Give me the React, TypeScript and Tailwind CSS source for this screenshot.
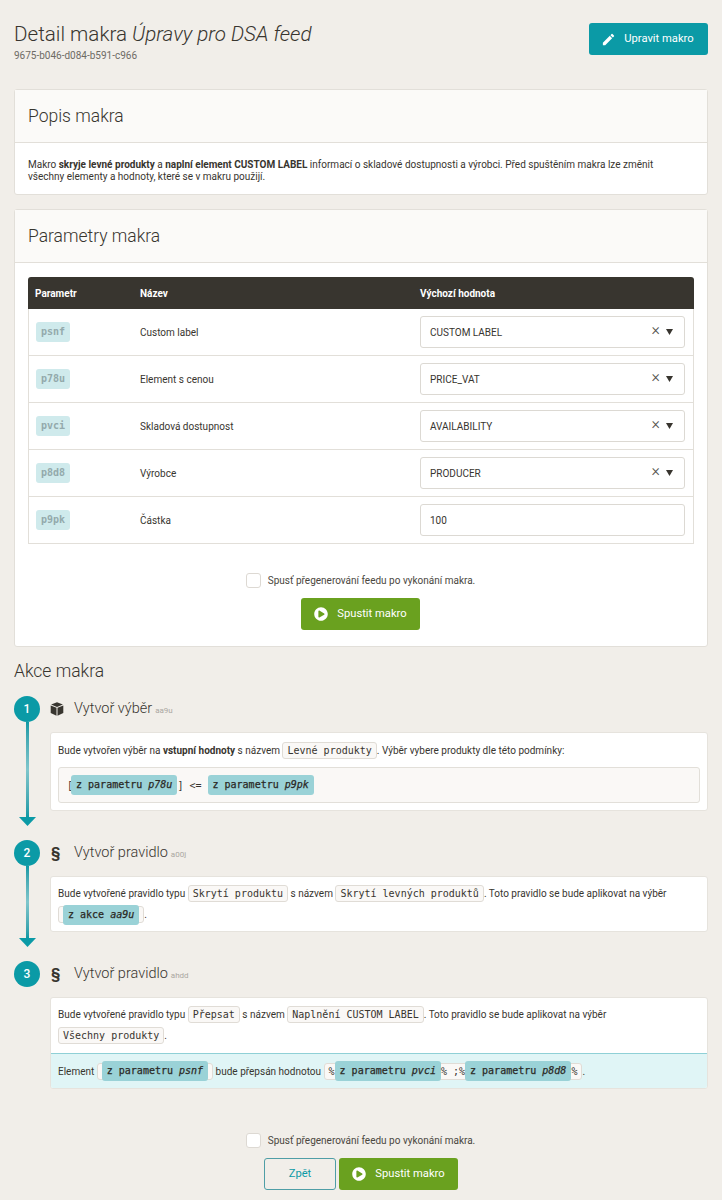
import React from "react";
import { MdEdit } from "react-icons/md";
import { FaPlayCircle } from "react-icons/fa";

const params = [
  { code: "psnf", name: "Custom label", value: "CUSTOM LABEL", select: true },
  { code: "p78u", name: "Element s cenou", value: "PRICE_VAT", select: true },
  { code: "pvci", name: "Skladová dostupnost", value: "AVAILABILITY", select: true },
  { code: "p8d8", name: "Výrobce", value: "PRODUCER", select: true },
  { code: "p9pk", name: "Částka", value: "100", select: false },
];

function Chip({ children }: { children: React.ReactNode }) {
  return (
    <code className="inline-flex h-[17px] shrink-0 items-center rounded-[3px] border border-[#e0dcd6] bg-[#faf8f6] px-[4px] font-['DejaVu_Sans_Mono',monospace] text-[10px] text-[#38352f] whitespace-pre">
      {children}
    </code>
  );
}

function Ref({ label, id }: { label: string; id: string }) {
  return (
    <span className="inline-block h-[20px] shrink-0 rounded-[3px] bg-[#9ad2d7] px-[5px] font-['DejaVu_Sans_Mono',monospace] text-[10px] leading-[20px] text-[#2b2925] whitespace-pre [-webkit-text-stroke:0.25px_#2b2925]">
      {label} <i>{id}</i>
    </span>
  );
}

function Line({ children }: { children: React.ReactNode }) {
  return <div className="flex h-[21px] items-center whitespace-pre">{children}</div>;
}

function PlayButton() {
  return (
    <button className="flex h-[32px] w-[119px] items-center justify-center gap-[9px] rounded-[3px] bg-[#6aa11f] text-[11.2px] text-white">
      <FaPlayCircle className="h-[14px] w-[14px]" />
      Spustit makro
    </button>
  );
}

function Regenerate() {
  return (
    <label className="flex h-[15px] items-center justify-center gap-[7px] pr-[1px] text-[10px] text-[#4a4740]">
      <span className="h-[15px] w-[15px] rounded-[3px] border border-[#ddd9d3] bg-white" />
      Spusť přegenerování feedu po vykonání makra.
    </label>
  );
}

function Card({ title, children }: { title: string; children: React.ReactNode }) {
  return (
    <section className="rounded-[3px] border border-[#e2dfd9] bg-white">
      <h2 className="h-[53px] border-b border-[#e2dfd9] bg-[#fbfaf8] px-[13px] text-[17.5px] leading-[52px] font-light text-[#38352f]">
        {title}
      </h2>
      {children}
    </section>
  );
}

function Step({ n, icon, title, id, arrow, children }: { n: number; icon: React.ReactNode; title: string; id: string; arrow?: boolean; children: React.ReactNode }) {
  return (
    <div className={"flex gap-[10px] " + (arrow ? "mb-[14px]" : "")}>
      <div className="flex w-[26px] shrink-0 flex-col items-center">
        <div className="flex h-[26px] w-[26px] items-center justify-center rounded-full bg-[#0b9aa6] text-[12px] font-medium text-white">{n}</div>
        {arrow && (
          <>
            <div className="w-[3px] flex-1 bg-gradient-to-b from-[#0b9aa6] via-[#7fc6cc] to-[#0b9aa6]" />
            <svg width="17" height="9" viewBox="0 0 17 9" className="text-[#0b9aa6]"><path d="M0 0h17L8.5 9z" fill="currentColor" /></svg>
          </>
        )}
      </div>
      <div className={"min-w-0 flex-1 " + (arrow ? "pb-[15px]" : "")}>
        <div className="flex h-[26px] items-center">
          <span className="flex w-[24px] shrink-0 items-center text-[#38352f]">{icon}</span>
          <span className="text-[14.5px] font-light text-[#38352f]">{title}</span>
          <span className="ml-[3px] mt-[3px] text-[8px] text-[#aaa7a1]">{id}</span>
        </div>
        <div className="mt-[10px] overflow-hidden rounded-[3px] border border-[#e6e3dd] bg-white text-[10px] text-[#38352f]">
          {children}
        </div>
      </div>
    </div>
  );
}

const Section = <span className="ml-[1px] text-[15px] font-bold">§</span>;

const Cube = (
  <svg width="14" height="14" viewBox="0 0 14 14" fill="currentColor">
    <path d="M7 0.2 12.9 2.6 7 5 1.1 2.6z" />
    <path d="M0.7 3.4 6.5 5.8V13.8L0.7 11z" />
    <path d="M13.3 3.4 7.5 5.8V13.8L13.3 11z" />
  </svg>
);

export default function App() {
  return (
    <div className="h-[1200px] overflow-hidden bg-[#f1eee9] px-[14px] font-['Roboto',sans-serif] text-[#38352f]">
      {/* Header */}
      <header className="flex items-start justify-between pt-[23px]">
        <div>
          <h1 className="text-[20.6px] leading-[22px] font-light">
            Detail makra <i>Úpravy pro DSA feed</i>
          </h1>
          <div className="mt-[5px] text-[10px] leading-[12px] text-[#6e6b65]">9675-b046-d084-b591-c966</div>
        </div>
        <button className="flex h-[32px] w-[119px] items-center justify-center gap-[8px] rounded-[3px] bg-[#0b9aa6] pr-[2px] text-[11.2px] text-white">
          <MdEdit className="h-[15px] w-[15px]" />
          Upravit makro
        </button>
      </header>

      <div className="mt-[27px]">
        <Card title="Popis makra">
          <p className="px-[13px] pt-[16px] pb-[11px] text-[10px] leading-[12px]">
            Makro <b className="font-bold">skryje levné produkty</b> a <b className="font-bold">naplní element CUSTOM LABEL</b> informací o skladové dostupnosti a výrobci. Před spuštěním makra lze změnit
            <br />
            všechny elementy a hodnoty, které se v makru použijí.
          </p>
        </Card>
      </div>

      <div className="mt-[14px]">
        <Card title="Parametry makra">
          <div className="px-[13px] pt-[14px]">
            <div className="grid h-[32px] grid-cols-[105px_280px_1fr] items-center rounded-t-[3px] bg-[#38352f] px-[7px] text-[10px] font-bold text-white">
              <span>Parametr</span>
              <span>Název</span>
              <span>Výchozí hodnota</span>
            </div>
            <div className="border-x border-[#e2dfd9]">
              {params.map((p) => (
                <div key={p.code} className="grid h-[47px] grid-cols-[105px_280px_1fr] items-center border-b border-[#e2dfd9] pl-[6px] pr-[8px] text-[10px]">
                  <span className="ml-[1px] h-[20px] w-[34px] rounded-[3px] bg-[#cfeaec] text-center font-['DejaVu_Sans_Mono',monospace] text-[10px] leading-[20px] font-bold text-[#93a9ab]">
                    {p.code}
                  </span>
                  <span>{p.name}</span>
                  <div className="flex h-[32px] items-center rounded-[3px] border border-[#dcd9d3] bg-white pl-[9px] pr-[11px]">
                    <span className="flex-1">{p.value}</span>
                    {p.select && (
                      <>
                        <span className="-mt-[4px] text-[16px] leading-none font-light text-[#56534d]">×</span>
                        <svg width="7" height="6" viewBox="0 0 7 6" className="ml-[6px] text-[#38352f]"><path d="M0 0h7L3.5 6z" fill="currentColor" /></svg>
                      </>
                    )}
                  </div>
                </div>
              ))}
            </div>
          </div>
          <div className="mt-[29px]"><Regenerate /></div>
          <div className="mt-[10px] flex justify-center pr-[1px] pb-[16px]"><PlayButton /></div>
        </Card>
      </div>

      <h2 className="mt-[14px] text-[17.5px] leading-[20px] font-light">Akce makra</h2>

      <div className="mt-[15px]">
        <Step n={1} icon={Cube} title="Vytvoř výběr" id="aa9u" arrow>
          <div className="px-[7px] pt-[8px] pb-[7px]">
            <div className="flex h-[18px] items-center whitespace-pre">
              Bude vytvořen výběr na <b>vstupní hodnoty</b> s názvem <Chip>Levné produkty</Chip>. Výběr vybere produkty dle této podmínky:
            </div>
            <div className="mt-[8px] flex h-[36px] items-center rounded-[3px] border border-[#e2dfd9] bg-[#faf8f6] pl-[8px] font-['DejaVu_Sans_Mono',monospace] text-[10px] whitespace-pre">
              <span className="-mr-[2px]">[</span><Ref label="z parametru" id="p78u" />{"] <= "}<Ref label="z parametru" id="p9pk" />
            </div>
          </div>
        </Step>
        <Step n={2} icon={Section} title="Vytvoř pravidlo" id="a00j" arrow>
          <div className="px-[7px] pt-[6px] pb-[6px]">
            <Line>
              Bude vytvořené pravidlo typu <Chip>Skrytí produktu</Chip> s názvem <Chip>Skrytí levných produktů</Chip>. Toto pravidlo se bude aplikovat na výběr
            </Line>
            <Line>
              <Chip><Ref label="z akce" id="aa9u" /></Chip>.
            </Line>
          </div>
        </Step>
        <Step n={3} icon={Section} title="Vytvoř pravidlo" id="ahdd">
          <div className="px-[7px] pt-[6px] pb-[7px]">
            <Line>
              Bude vytvořené pravidlo typu <Chip>Přepsat</Chip> s názvem <Chip>Naplnění CUSTOM LABEL</Chip>. Toto pravidlo se bude aplikovat na výběr
            </Line>
            <Line>
              <Chip>Všechny produkty</Chip>.
            </Line>
          </div>
          <div className="flex h-[35px] items-center border-t border-[#8fd0d6] bg-[#e0f5f6] px-[7px] whitespace-pre">
            Element <Chip><Ref label="z parametru" id="psnf" /></Chip> bude přepsán hodnotou <Chip>%<Ref label="z parametru" id="pvci" />{"% ;%"}<Ref label="z parametru" id="p8d8" />%</Chip>.
          </div>
        </Step>
      </div>

      <div className="mt-[44px]"><Regenerate /></div>
      <div className="mt-[10px] flex justify-center gap-[3px]">
        <button className="h-[32px] w-[72px] rounded-[3px] border border-[#4f9ea6] text-[11.2px] text-[#0b9aa6]">Zpět</button>
        <PlayButton />
      </div>
    </div>
  );
}
